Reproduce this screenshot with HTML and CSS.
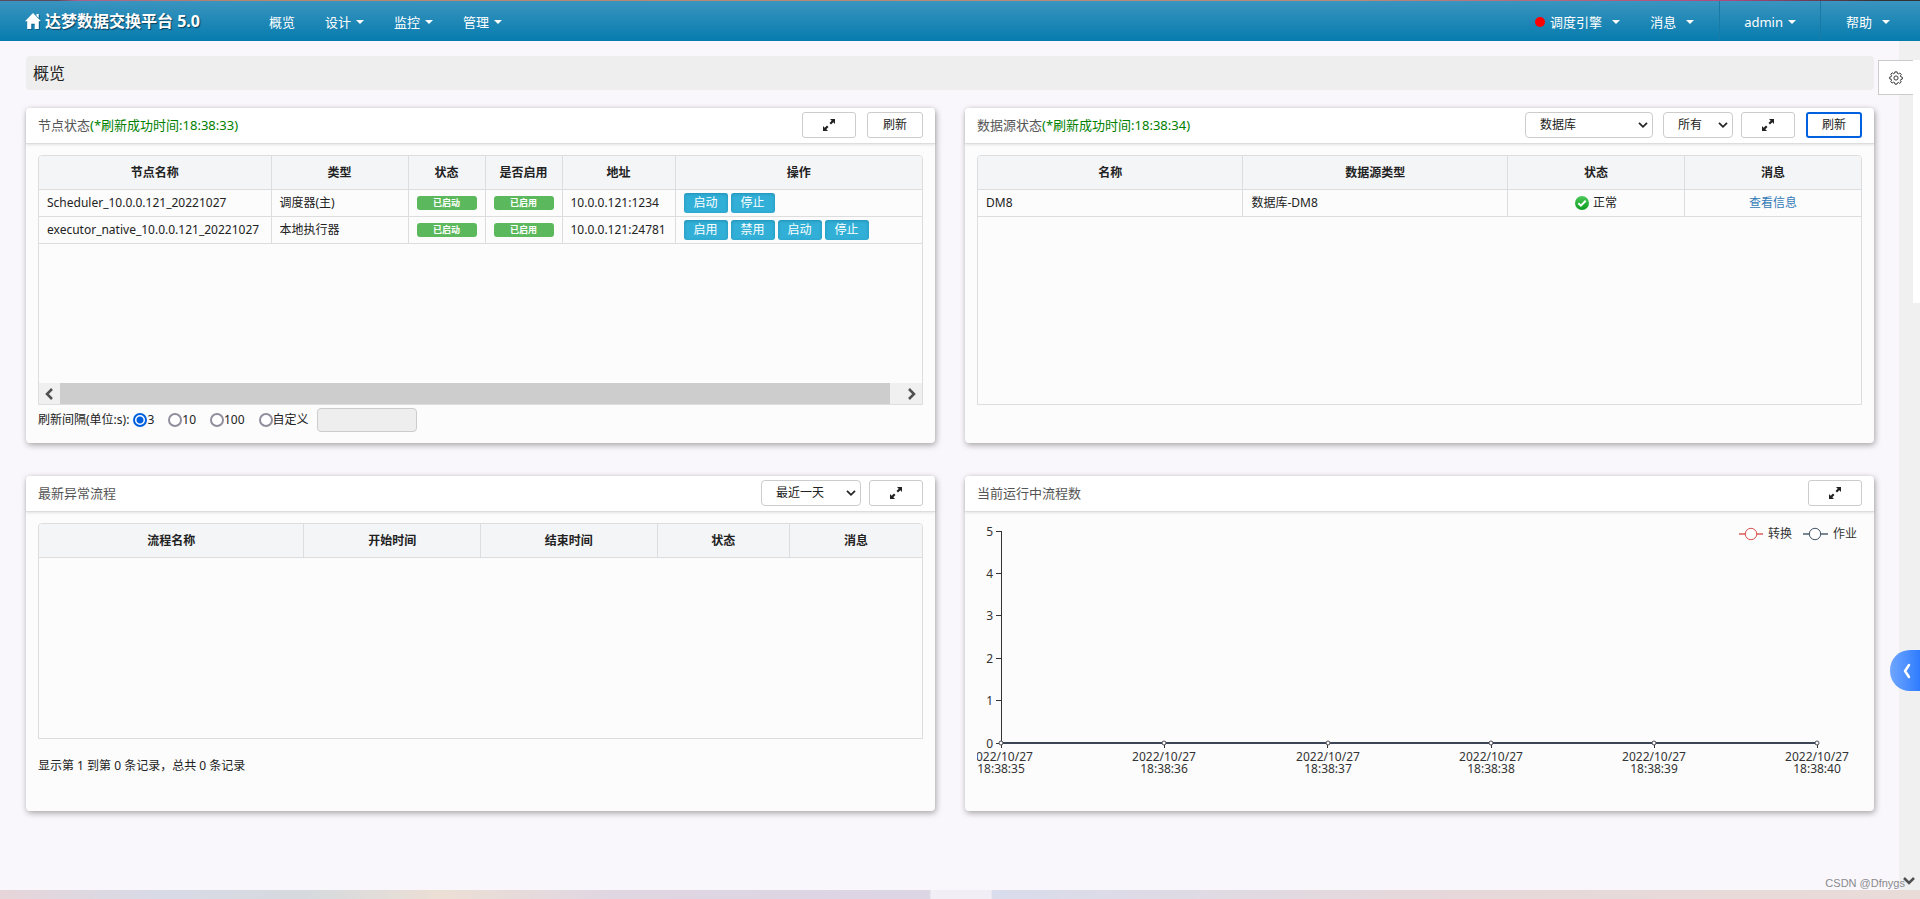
FILE: index.html
```html
<!DOCTYPE html>
<html lang="zh-CN">
<head>
<meta charset="utf-8">
<title>达梦数据交换平台 5.0</title>
<link rel="stylesheet" href="styles.css">
</head>
<body>
<svg class="sprite" aria-hidden="true">
  <symbol id="expand" viewBox="0 0 12 12">
    <path fill="#222" d="M7 0H12v5L10.300 3.300 8 5.500 6.500 4l2.200-2.300zM5 12H0V7l1.700 1.700L4 6.500 5.500 8 3.300 10.300z"/>
  </symbol>
  <symbol id="chevron" viewBox="0 0 10 6">
    <path fill="none" stroke="#222" stroke-width="1.700" d="M1 .8l4 4 4-4"/>
  </symbol>
</svg>
<div class="wallpaper-top"></div>
<header class="navbar">
  <a class="brand" href="#">
    <svg class="home" viewBox="0 0 16 16"><path fill="#fff" d="M8 0l8 8.200h-2.200V16H9.700v-5.200H6.300V16H2.200V8.200H0zM11.500 1h2.200v4l-2.200-2.200z"/></svg>
    <span>达梦数据交换平台 5.0</span>
  </a>
  <nav class="menu">
    <a href="#">概览</a>
    <a href="#">设计<i class="caret"></i></a>
    <a href="#">监控<i class="caret"></i></a>
    <a href="#">管理<i class="caret"></i></a>
  </nav>
  <nav class="tools">
    <a class="engine" href="#"><i class="dot"></i>调度引擎<i class="caret"></i></a>
    <a class="message" href="#">消息<i class="caret"></i></a>
    <a class="user" href="#">admin<i class="caret"></i></a>
    <a class="help" href="#">帮助<i class="caret"></i></a>
  </nav>
</header>

<div class="shell">
  <main class="content">
    <h1 class="page-title">概览</h1>
    <div class="panels">
      <section class="panel">
        <header class="panel-head">
          <h2>节点状态<span class="ok">(*刷新成功时间:18:38:33)</span></h2>
          <button class="btn expand" aria-label="全屏"><svg><use href="#expand"/></svg></button>
          <button class="btn refresh">刷新</button>
        </header>
        <div class="panel-body">
          <div class="table-box">
            <table>
              <colgroup><col class="c-name"><col class="c-type"><col class="c-state"><col class="c-state"><col class="c-addr"><col></colgroup>
              <thead><tr><th>节点名称</th><th>类型</th><th>状态</th><th>是否启用</th><th>地址</th><th>操作</th></tr></thead>
              <tbody>
                <tr><td>Scheduler_10.0.0.121_20221027</td><td>调度器(主)</td><td><span class="label">已启动</span></td><td><span class="label">已启用</span></td><td>10.0.0.121:1234</td>
                  <td><div class="actions"><button>启动</button><button>停止</button></div></td></tr>
                <tr><td>executor_native_10.0.0.121_20221027</td><td>本地执行器</td><td><span class="label">已启动</span></td><td><span class="label">已启用</span></td><td>10.0.0.121:24781</td>
                  <td><div class="actions"><button>启用</button><button>禁用</button><button>启动</button><button>停止</button></div></td></tr>
              </tbody>
            </table>
            <div class="hscroll">
              <svg viewBox="0 0 8 12"><path fill="none" stroke="#505050" stroke-width="2.500" d="M7 1L2 6l5 5"/></svg>
              <div class="thumb"></div>
              <svg viewBox="0 0 8 12"><path fill="none" stroke="#505050" stroke-width="2.500" d="M1 1l5 5-5 5"/></svg>
            </div>
          </div>
          <form class="interval">
            <span>刷新间隔(单位:s):</span>
            <label><input type="radio" name="gap" checked>3</label>
            <label><input type="radio" name="gap">10</label>
            <label><input type="radio" name="gap">100</label>
            <label><input type="radio" name="gap">自定义</label>
            <input class="custom" type="text" aria-label="自定义" disabled>
          </form>
        </div>
      </section>

      <section class="panel">
        <header class="panel-head">
          <h2>数据源状态<span class="ok">(*刷新成功时间:18:38:34)</span></h2>
          <div class="select source"><select aria-label="数据源类型"><option>数据库</option></select><svg><use href="#chevron"/></svg></div>
          <div class="select range"><select aria-label="状态"><option>所有</option></select><svg><use href="#chevron"/></svg></div>
          <button class="btn expand" aria-label="全屏"><svg><use href="#expand"/></svg></button>
          <button class="btn refresh focused">刷新</button>
        </header>
        <div class="panel-body">
          <div class="table-box">
            <table>
              <colgroup><col class="w30"><col class="w30"><col class="w20"><col class="w20"></colgroup>
              <thead><tr><th>名称</th><th>数据源类型</th><th>状态</th><th>消息</th></tr></thead>
              <tbody><tr><td>DM8</td><td>数据库-DM8</td>
                <td><div class="status"><svg viewBox="0 0 14 14"><defs><linearGradient id="g" x2="0" y2="1"><stop stop-color="#4dc95a"/><stop offset="1" stop-color="#0c9c1f"/></linearGradient></defs><circle cx="7" cy="7" r="7" fill="url(#g)"/><path fill="none" stroke="#fff" stroke-width="2" d="M3.300 7.200l2.600 2.500 4.800-5"/></svg>正常</div></td>
                <td class="center"><a href="#">查看信息</a></td></tr></tbody>
            </table>
          </div>
        </div>
      </section>

      <section class="panel">
        <header class="panel-head">
          <h2>最新异常流程</h2>
          <div class="select period"><select aria-label="时间范围"><option>最近一天</option></select><svg><use href="#chevron"/></svg></div>
          <button class="btn expand" aria-label="全屏"><svg><use href="#expand"/></svg></button>
        </header>
        <div class="panel-body">
          <div class="table-box short">
            <table>
              <colgroup><col class="w30"><col class="w20"><col class="w20"><col class="w15"><col class="w15"></colgroup>
              <thead><tr><th>流程名称</th><th>开始时间</th><th>结束时间</th><th>状态</th><th>消息</th></tr></thead>
            </table>
          </div>
          <p class="summary">显示第 1 到第 0 条记录，总共 0 条记录</p>
        </div>
      </section>

      <section class="panel">
        <header class="panel-head">
          <h2>当前运行中流程数</h2>
          <button class="btn expand" aria-label="全屏"><svg><use href="#expand"/></svg></button>
        </header>
        <div class="panel-body">
          <svg class="chart" viewBox="0 0 885 264">
            <g class="axis">
              <path d="M24.500 8v212M19 8.500h6M19 50.500h6M19 92.500h6M19 135.500h6M19 177.500h6M19 220.500h6"/>
              <path d="M24.500 220v5M187.500 220v5M350.500 220v5M514.500 220v5M677.500 220v5M840.500 220v5"/>
            </g>
            <g class="ylabels">
              <text x="16" y="13">5</text><text x="16" y="55">4</text><text x="16" y="97">3</text><text x="16" y="140">2</text><text x="16" y="182">1</text><text x="16" y="225">0</text>
            </g>
            <path stroke="#3b4556" stroke-width="2" d="M24 220h817"/>
            <g fill="#fff" stroke="#4c4c58">
              <circle cx="24" cy="220" r="2"/><circle cx="187" cy="220" r="2"/><circle cx="351" cy="220" r="2"/><circle cx="514" cy="220" r="2"/><circle cx="677" cy="220" r="2"/><circle cx="840" cy="220" r="2"/>
            </g>
            <g class="xlabels">
              <text x="24" y="238">2022/10/27<tspan x="24" dy="12">18:38:35</tspan></text>
              <text x="187" y="238">2022/10/27<tspan x="187" dy="12">18:38:36</tspan></text>
              <text x="351" y="238">2022/10/27<tspan x="351" dy="12">18:38:37</tspan></text>
              <text x="514" y="238">2022/10/27<tspan x="514" dy="12">18:38:38</tspan></text>
              <text x="677" y="238">2022/10/27<tspan x="677" dy="12">18:38:39</tspan></text>
              <text x="840" y="238">2022/10/27<tspan x="840" dy="12">18:38:40</tspan></text>
            </g>
            <g stroke="#d9534f" fill="#fff"><path stroke-opacity=".7" stroke-width="2" d="M762 11h24"/><circle cx="774" cy="11" r="5.700"/></g>
            <text x="791" y="15">转换</text>
            <g stroke="#42566a" fill="#fff"><path stroke-opacity=".7" stroke-width="2" d="M826 11h25"/><circle cx="838" cy="11" r="5.700"/></g>
            <text x="856" y="15">作业</text>
          </svg>
        </div>
      </section>
    </div>
  </main>
  <aside class="scroll-gutter">
    <div class="page-thumb"></div>
    <svg viewBox="0 0 12 8"><path fill="none" stroke="#505050" stroke-width="2.500" d="M1 1l5 5 5-5"/></svg>
  </aside>
  <button class="settings" aria-label="设置">
    <svg viewBox="0 0 16 16" fill="none" stroke="#333" stroke-width="1.100"><path d="M6.800 1h2.400l.4 1.800 1.200.5 1.600-1 1.600 1.700-1 1.500.5 1.200 1.700.4v2.200l-1.700.4-.5 1.200 1 1.600-1.700 1.600-1.500-1-1.200.5L9.200 15H6.800l-.4-1.700-1.200-.5-1.600 1L2 12.200l1-1.600-.5-1.200L.8 9V6.900l1.700-.4.5-1.200-1-1.600 1.700-1.600 1.500 1 1.200-.5z"/><circle cx="8" cy="8" r="2.400"/></svg>
  </button>
  <button class="drawer" aria-label="展开">
    <svg viewBox="0 0 8 16"><path fill="none" stroke="#fff" stroke-width="2.500" stroke-linecap="round" stroke-linejoin="round" d="M6 2L2 8l4 6"/></svg>
  </button>
  <span class="watermark">CSDN @Dfnygs</span>
</div>
<div class="wallpaper-bottom"></div>
</body>
</html>
```
FILE: styles.css
```css
* { box-sizing: border-box; }
body {
  margin: 0;
  min-height: 100vh;
  display: flex;
  flex-direction: column;
  background: #f9f7fb;
  color: #222;
  font: 12px/16px "Noto Sans", "Noto Sans CJK SC", sans-serif;
}
button, input, select { font: inherit; color: inherit; margin: 0; }
h1, h2, p { margin: 0; font-weight: normal; }
svg { display: block; }
.sprite { position: absolute; width: 0; height: 0; }

.wallpaper-top {
  height: 1px;
  background: linear-gradient(90deg, #5d4a5c 0, #5d4a5c 3%, #a8608c 4%, #b8866c 12%, #b98c78 70%, #b04a80 90%, #333 98%);
}
.wallpaper-bottom {
  height: 9px;
  background: linear-gradient(90deg, #e6d5d9 0, #d8dae6 8%, #d6dade 16%, #ecdfd5 23%, #e0d6e2 32%, #dcd5e4 48.400%, #f1eff5 48.500%, #f1eff5 51.600%, #d9dcec 51.700%, #e6d8da 75%, #e8dbd8 100%);
}

.navbar {
  height: 40px;
  display: flex;
  align-items: stretch;
  background: linear-gradient(#3a94bf, #067cae);
  font-size: 13px;
}
.navbar a {
  display: flex;
  align-items: center;
  color: #fff;
  text-decoration: none;
}
.brand {
  width: 254px;
  padding-left: 25px;
  gap: 4px;
  font-size: 16px;
  font-weight: bold;
  text-shadow: 1px 1px 1px #0b3f5c;
  white-space: nowrap;
}
.home { width: 16px; height: 16px; filter: drop-shadow(1px 1px 0 #0b5f88); }
.menu, .tools { display: flex; padding-top: 2px; }
.menu a { padding: 0 15px; gap: 5px; }
.tools { margin-left: auto; padding-top: 0; }
.tools a { gap: 10px; padding-top: 2px; }
.caret {
  border: 4px solid transparent;
  border-top-color: #fff;
  border-bottom: 0;
}
.dot { width: 10px; height: 10px; border-radius: 50%; background: #f00; }
.tools .engine { gap: 5px; padding-right: 30px; }
.engine .caret { margin-left: 5px; }
.tools .message { padding-right: 25px; }
.tools .user { gap: 5px; padding: 2px 24px 0; border-left: 1px solid #1a7aa6; border-right: 1px solid #1a7aa6; }
.tools .help { padding: 2px 30px 0 25px; }

.shell { position: relative; flex: 1; display: flex; }
.content { flex: 1; min-width: 0; padding: 15px 25px 24px 26px; }
.page-title {
  padding: 5px 7px;
  border-radius: 4px;
  background: #eee;
  font-size: 16px;
  line-height: 24px;
}
.panels {
  margin-top: 18px;
  display: grid;
  grid-template-columns: 1fr 1fr;
  gap: 33px 30px;
}
.panel {
  min-width: 0;
  min-height: 335px;
  border-radius: 4px;
  background: #fcfcfc;
  box-shadow: 1px 2px 6px rgba(0, 0, 0, .35);
}
.panel-head {
  height: 36px;
  padding: 0 12px 2px;
  display: flex;
  align-items: center;
  gap: 8px;
  border-bottom: 1px solid #ddd;
  border-radius: 4px 4px 0 0;
  background: #fff;
  box-shadow: 0 1px 3px rgba(0, 0, 0, .1);
}
.panel-head h2 { flex: 1; font-size: 13px; line-height: 20px; color: #555; }
.ok { color: #008000; }
.btn {
  height: 26px;
  padding: 0;
  display: grid;
  place-items: center;
  border: 1px solid #ccc;
  border-radius: 3px;
  background: #fff;
}
.btn svg { width: 12px; height: 12px; }
.expand { width: 54px; }
.refresh { width: 56px; margin-left: 3px; }
.focused { border: 2px solid #0061e0; }
.select { position: relative; }
.select select {
  width: 100%;
  height: 26px;
  padding: 0 14px;
  display: block;
  appearance: none;
  border: 1px solid #ccc;
  border-radius: 4px;
  background: #fff;
}
.select svg { position: absolute; right: 5px; top: 10px; width: 10px; height: 6px; pointer-events: none; }
.source { width: 128px; margin-right: 2px; }
.range { width: 70px; }
.period { width: 100px; }

.panel-body { padding: 11px 12px; }
.table-box {
  height: 250px;
  display: flex;
  flex-direction: column;
  border: 1px solid #ddd;
  border-radius: 4px 4px 0 0;
  overflow: hidden;
}
.short { height: 216px; }
table { width: 100%; border-collapse: collapse; table-layout: fixed; }
.c-name { width: 232px; }
.c-type { width: 137px; }
.c-state { width: 77px; }
.c-addr { width: 113px; }
.w30 { width: 30%; }
.w20 { width: 20%; }
.w15 { width: 15%; }
th, td { padding: 0 8px; border: 1px solid #ddd; white-space: nowrap; }
th:first-child, td:first-child { border-left: 0; }
th:last-child, td:last-child { border-right: 0; }
th { height: 33px; padding-top: 2px; border-top: 0; background: #f4f5f7; font-weight: bold; }
td { height: 27px; }
td a { color: #337ab7; text-decoration: none; }
.center { text-align: center; }
.label {
  display: block;
  height: 14px;
  border-radius: 3px;
  background: #5cb85c;
  color: #fff;
  font-size: 9px;
  line-height: 14px;
  font-weight: bold;
  text-align: center;
}
.actions { display: flex; gap: 3px; }
.actions button {
  width: 44px;
  height: 20px;
  padding: 0;
  border: 0;
  border-radius: 3px;
  background: #31afd6;
  box-shadow: inset 0 1px 3px rgba(0, 70, 110, .3);
  color: #fff;
  line-height: 20px;
}
.status { display: flex; justify-content: center; align-items: center; gap: 4px; }
.status svg { width: 14px; height: 14px; }
.hscroll {
  margin-top: auto;
  height: 21px;
  padding: 0 6px;
  display: flex;
  align-items: center;
  gap: 7px;
  background: #f0f0f0;
}
.hscroll svg { width: 8px; height: 12px; }
.thumb { flex: 1; align-self: stretch; margin-right: 11px; background: #cdcdcd; }

.interval { padding-top: 3px; display: flex; align-items: center; }
.interval label { display: flex; align-items: center; margin-right: 14px; }
.interval span { margin-right: 4px; }
.interval input[type="radio"] {
  appearance: none;
  width: 14px;
  height: 14px;
  border: 2px solid #8f8f9d;
  border-radius: 50%;
  background: #fff;
}
.interval input[type="radio"]:checked {
  border-color: #0061e0;
  background: radial-gradient(#0061e0 3px, #fff 4px);
}
.interval label:nth-of-type(4) { margin-right: 8px; }
.interval .custom { width: 100px; height: 24px; border: 1px solid #ccc; border-radius: 4px; background: #eee; }
.summary { padding-top: 19px; }

.chart { width: 100%; height: auto; overflow: hidden; }
.chart text { font-size: 12px; fill: #333; }
.axis path { stroke: #333; fill: none; }
.ylabels { text-anchor: end; }
.xlabels { text-anchor: middle; }

.scroll-gutter {
  width: 21px;
  padding: 19px 0 5px;
  display: flex;
  flex-direction: column;
  justify-content: space-between;
  background: #f0f0f0;
}
.page-thumb { width: 7px; height: 243px; align-self: flex-end; background: #fff; }
.scroll-gutter svg { width: 12px; height: 8px; margin-left: 4px; }
.settings {
  position: absolute;
  top: 19px;
  right: 7px;
  width: 35px;
  height: 35px;
  padding: 0 10px;
  border: 1px solid #ccc;
  border-right: 0;
  background: #fff;
}
.settings svg { width: 14px; height: 14px; }
.drawer {
  position: absolute;
  top: 609px;
  right: 0;
  width: 30px;
  height: 41px;
  padding: 0 0 0 13px;
  border: 0;
  border-radius: 20px 0 0 20px;
  background: linear-gradient(90deg, #70a7ff, #2f7cff);
}
.drawer svg { width: 8px; height: 16px; }
.watermark {
  position: absolute;
  right: 15px;
  bottom: 0;
  color: #8a8a8e;
  font-family: "Liberation Sans", sans-serif;
  font-size: 11px;
  line-height: 14px;
}
```
